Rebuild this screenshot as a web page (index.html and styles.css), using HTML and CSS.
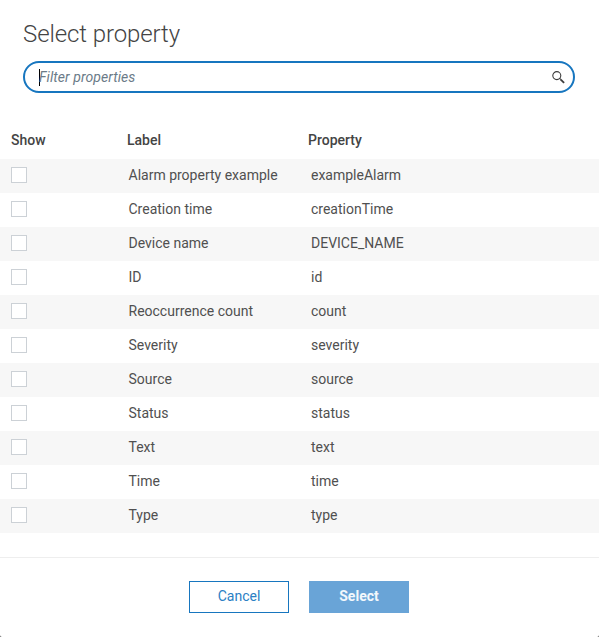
FILE: index.html
```html
<!DOCTYPE html>
<html lang="en">
<head>
<meta charset="utf-8">
<title>Select property</title>
<link rel="stylesheet" href="styles.css">
</head>
<body>
<main class="dialog">
  <h1 class="title">Select property</h1>
  <div class="search">
    <span class="caret"></span>
    <span class="placeholder">Filter properties</span>
    <svg class="search-icon" width="14" height="14" viewBox="0 0 14 14" fill="none" stroke="#3c3c3c"><circle cx="4.8" cy="5.6" r="4" stroke-width="1.1"/><path d="M7.6 8.3l1.1 1.1" stroke-width="1.1"/><path d="M8.5 9.3l3.6 3.6" stroke-width="1.8"/></svg>
  </div>
  <div class="table">
    <div class="row head"><span>Show</span><span>Label</span><span>Property</span></div>
    <div class="row"><i class="check"></i><span>Alarm property example</span><span>exampleAlarm</span></div>
    <div class="row"><i class="check"></i><span>Creation time</span><span>creationTime</span></div>
    <div class="row"><i class="check"></i><span>Device name</span><span>DEVICE_NAME</span></div>
    <div class="row"><i class="check"></i><span>ID</span><span>id</span></div>
    <div class="row"><i class="check"></i><span>Reoccurrence count</span><span>count</span></div>
    <div class="row"><i class="check"></i><span>Severity</span><span>severity</span></div>
    <div class="row"><i class="check"></i><span>Source</span><span>source</span></div>
    <div class="row"><i class="check"></i><span>Status</span><span>status</span></div>
    <div class="row"><i class="check"></i><span>Text</span><span>text</span></div>
    <div class="row"><i class="check"></i><span>Time</span><span>time</span></div>
    <div class="row"><i class="check"></i><span>Type</span><span>type</span></div>
  </div>
  <footer class="footer">
    <button class="btn cancel">Cancel</button>
    <button class="btn select">Select</button>
  </footer>
</main>
</body>
</html>
```
FILE: styles.css
```css
* { box-sizing: border-box; }
body { margin: 0; background: #555; font-family: Roboto, sans-serif; font-size: 14px; color: #505050; }
.dialog { height: 637px; display: flex; flex-direction: column; background: #fff; border-radius: 0 0 2px 2px; overflow: hidden; }
.title { margin: 18px 23px 0; height: 43px; line-height: 32px; font-size: 24px; font-weight: 300; color: #444; letter-spacing: -0.1px; }
.search { height: 32px; flex: none; margin: 0 24px 0 23px; border: 2px solid #1776bf; border-radius: 16px; display: flex; align-items: center; padding: 0 7px 0 14px; }
.caret { width: 1px; height: 17px; background: #000; margin-right: -1px; }
.placeholder { flex: 1; font-style: italic; color: #6b7b88; letter-spacing: 0.06px; }
.table { margin-top: 28px; }
.row { display: grid; grid-template-columns: 117.5px 182.5px 1fr; align-items: center; height: 34px; padding: 0 11px; line-height: 18px; }
.row:nth-child(even) { background: #f7f7f7; }
.row > span { padding-bottom: 2px; }
.head { height: 38px; grid-template-columns: 116px 181px 1fr; font-weight: 500; color: #444; }
.head > span { padding-bottom: 0; }
.check { width: 16px; height: 16px; border: 1px solid #ccd1d6; background: #fff; margin-top: -2px; }
.footer { margin-top: 24px; border-top: 1px solid #eee; height: 80px; padding: 23px 1px 0 0; display: flex; justify-content: center; gap: 20px; }
.btn { width: 100px; height: 32px; padding: 0 0 2px; font: 400 14px Roboto, sans-serif; border: 1px solid #1776bf; background: #fff; color: #2b80c4; }
.select { background: #69a4d7; border-color: #69a4d7; color: #f3f8fc; font-weight: 700; }
```
